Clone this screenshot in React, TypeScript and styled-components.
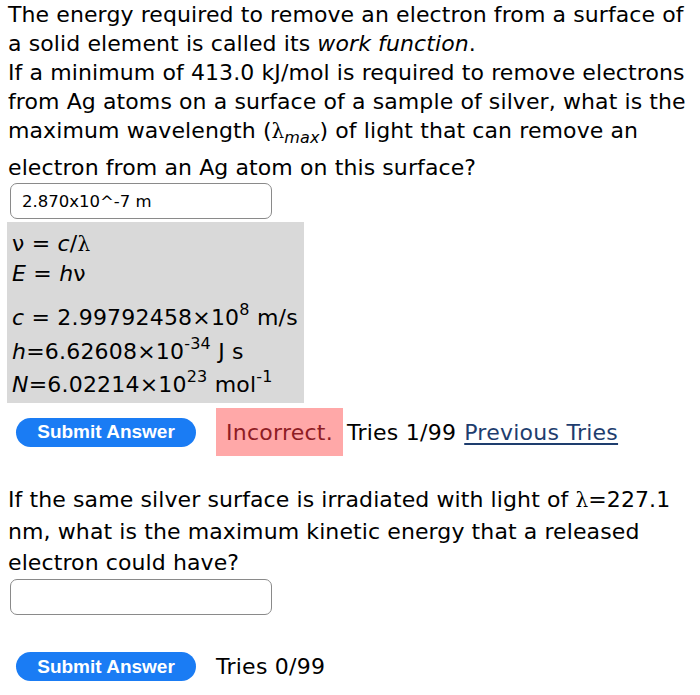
import React from 'react';
import styled, { createGlobalStyle } from 'styled-components';

const colors = {
  text: '#000000',
  hintBg: '#d9d9d9',
  inputBorder: '#8a8a8a',
  button: '#1a7cf4',
  wrongBg: '#ffa8a8',
  wrongText: '#8e1c24',
  link: '#1e3d6e',
};

const GlobalStyle = createGlobalStyle`
  html, body {
    margin: 0;
    padding: 0;
    background: #ffffff;
  }
  body {
    font-family: "DejaVu Sans", Verdana, sans-serif;
    color: ${colors.text};
  }
`;

const SPage = styled.main`
  padding: 0 8px;
  width: 684px;
`;

const SQuestion = styled.p<{ $top?: number; $lh?: number }>`
  margin: ${(p) => p.$top ?? 0}px 0 0 0;
  font-size: 22px;
  line-height: ${(p) => p.$lh ?? 29}px;
  letter-spacing: 0.1px;
  white-space: nowrap;
`;

const SSub = styled.sub`
  font-size: 16px;
  font-style: italic;
  line-height: 30px;
  vertical-align: -5px;
`;

const SGreek = styled.span`
  font-family: "DejaVu Serif", serif;
  font-size: 20px;
`;

const SNu = styled.span`
  font-family: "DejaVu Sans", Verdana, sans-serif;
`;

const SInput = styled.input`
  display: block;
  box-sizing: border-box;
  width: 262px;
  height: 36px;
  margin: 1px 0 0 2px;
  padding: 0 11px;
  border: 1.5px solid ${colors.inputBorder};
  border-radius: 7px;
  font-family: "DejaVu Sans", Verdana, sans-serif;
  font-size: 16.5px;
  color: #000;
  background: #fff;
  outline: none;
`;

const SHint = styled.div`
  width: 297px;
  box-sizing: border-box;
  margin: 3px 0 0 -1px;
  padding: 7px 0 4px 5px;
  background: ${colors.hintBg};
  font-size: 22px;
  letter-spacing: 0.2px;
`;

const SHintLine = styled.div<{ $gap?: number }>`
  line-height: 29px;
  margin-top: ${(p) => p.$gap ?? 0}px;
  white-space: nowrap;
`;

const SSup = styled.sup`
  font-size: 16px;
  line-height: 0;
  vertical-align: 10px;
`;

const SRow = styled.div<{ $top: number }>`
  display: flex;
  align-items: center;
  margin-top: ${(p) => p.$top}px;
  padding-left: 8px;
  font-size: 22px;
  letter-spacing: 0.25px;
  white-space: nowrap;
`;

const SButton = styled.button`
  width: 180px;
  height: 29px;
  margin-right: 20px;
  padding: 0;
  border: none;
  border-radius: 15px;
  background: ${colors.button};
  color: #ffffff;
  font-family: "Liberation Sans", Arial, sans-serif;
  font-weight: bold;
  font-size: 19px;
  letter-spacing: 0;
  cursor: pointer;
`;

const SWrong = styled.span`
  display: inline-flex;
  align-items: center;
  height: 48px;
  padding: 0 10px;
  margin-right: 4px;
  background: ${colors.wrongBg};
  color: ${colors.wrongText};
`;

const STries = styled.span`
  margin-right: 8px;
`;

const SLink = styled.a`
  color: ${colors.link};
  text-decoration: underline;
  text-underline-offset: 3px;
`;

export default function App() {
  return (
    <>
      <GlobalStyle />
      <SPage>
        <SQuestion>
          The energy required to remove an electron from a surface of
          <br />
          a solid element is called its <i>work function</i>.
          <br />
          If a minimum of 413.0 kJ/mol is required to remove electrons
          <br />
          from Ag atoms on a surface of a sample of silver, what is the
          <br />
          maximum wavelength (<SGreek>λ</SGreek>
          <SSub>max</SSub>) of light that can remove an
          <br />
          electron from an Ag atom on this surface?
        </SQuestion>
        <SInput defaultValue="2.870x10^-7 m" />
        <SHint>
          <SHintLine>
            <SNu>ν</SNu> = <i>c</i>/<SGreek>λ</SGreek>
          </SHintLine>
          <SHintLine>
            <i>E</i> = <i>h</i>
            <SNu>ν</SNu>
          </SHintLine>
          <SHintLine $gap={15}>
            <i>c</i> = 2.99792458×10<SSup>8</SSup> m/s
          </SHintLine>
          <SHintLine $gap={5}>
            <i>h</i>=6.62608×10<SSup>-34</SSup> J s
          </SHintLine>
          <SHintLine $gap={4}>
            <i>N</i>=6.02214×10<SSup>23</SSup> mol<SSup>-1</SSup>
          </SHintLine>
        </SHint>
        <SRow $top={5}>
          <SButton type="button">Submit Answer</SButton>
          <SWrong>Incorrect.</SWrong>
          <STries>Tries 1/99</STries>
          <SLink href="#">Previous Tries</SLink>
        </SRow>
        <SQuestion $top={28} $lh={31}>
          If the same silver surface is irradiated with light of <SGreek>λ</SGreek>=227.1
          <br />
          nm, what is the maximum kinetic energy that a released
          <br />
          electron could have?
        </SQuestion>
        <SInput />
        <SRow $top={37}>
          <SButton type="button">Submit Answer</SButton>
          <STries>Tries 0/99</STries>
        </SRow>
      </SPage>
    </>
  );
}
